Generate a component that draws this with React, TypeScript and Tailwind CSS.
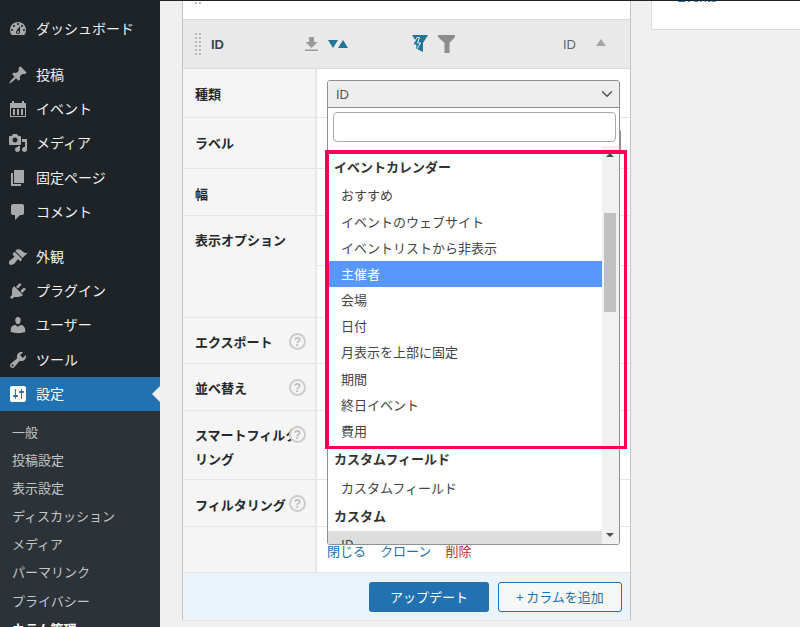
import { ChevronDown } from 'lucide-react';

const jp = 'font-["Noto_Sans_CJK_JP","Noto_Sans",sans-serif]';

// Admin menu icons (20x20 filled glyphs)
const ICONS: Record<string, string> = {
  dashboard:
    'M3.76 16h12.48c1.1-1.37 1.76-3.11 1.76-5 0-4.42-3.58-8-8-8s-8 3.58-8 8c0 1.89.66 3.63 1.76 5zM10 4c.55 0 1 .45 1 1s-.45 1-1 1-1-.45-1-1 .45-1 1-1zM6 6c.55 0 1 .45 1 1s-.45 1-1 1-1-.45-1-1 .45-1 1-1zm8 0c.55 0 1 .45 1 1s-.45 1-1 1-1-.45-1-1 .45-1 1-1zm-5.37 5.55L12 7v6c0 1.1-.9 2-2 2s-2-.9-2-2c0-.57.24-1.08.63-1.45zM4 10c.55 0 1 .45 1 1s-.45 1-1 1-1-.45-1-1 .45-1 1-1zm12 0c.55 0 1 .45 1 1s-.45 1-1 1-1-.45-1-1 .45-1 1-1zm-5 3c0-.55-.45-1-1-1s-1 .45-1 1 .45 1 1 1 1-.45 1-1z',
  post: 'M10.44 3.02l1.82-1.82 6.36 6.35-1.83 1.82c-1.05-.68-2.48-.57-3.41.36l-.75.75c-.92.93-1.04 2.35-.35 3.41l-1.83 1.82-2.41-2.41-2.8 2.79c-.42.42-3.38 2.71-3.8 2.29s1.86-3.39 2.28-3.81l2.79-2.79L4.1 9.36l1.83-1.82c1.05.69 2.48.57 3.4-.36l.75-.75c.93-.92 1.05-2.35.36-3.41z',
  event:
    'M2 4h2V2h2v2h8V2h2v2h2v14H2V4zm1 5v8h14V9H3zm2 1h2v6H5v-6zm4 0h2v6H9v-6zm4 0h2v6h-2v-6z',
  media:
    'M13 11V4c0-.55-.45-1-1-1h-1.67L9 1H5L3.67 3H2c-.55 0-1 .45-1 1v7c0 .55.45 1 1 1h10c.55 0 1-.45 1-1zM7 4.5c1.38 0 2.5 1.12 2.5 2.5S8.38 9.5 7 9.5 4.5 8.38 4.5 7 5.62 4.5 7 4.5zM14 6h5v10.5c0 1.38-1.12 2.5-2.5 2.5S14 17.88 14 16.5s1.12-2.5 2.5-2.5c.17 0 .34.02.5.05V9h-3V6zm-4 8.05V13h2v3.5c0 1.38-1.12 2.5-2.5 2.5S7 17.88 7 16.5 8.12 14 9.5 14c.17 0 .34.02.5.05z',
  page: 'M6 15V2h10v13H6zm-1 1h8v2H3V5h2v11z',
  comment:
    'M5 2h9c1.1 0 2 .9 2 2v7c0 1.1-.9 2-2 2h-2l-5 5v-5H5c-1.1 0-2-.9-2-2V4c0-1.1.9-2 2-2z',
  appearance:
    'M14.48 11.06L7.41 3.99l1.5-1.5c.5-.56 2.3-.47 3.51.32 1.21.8 1.43 1.28 2.91 2.1 1.18.64 2.45 1.26 4.45.85zm-.71.71L6.7 4.7 4.93 6.47c-.39.39-.39 1.02 0 1.41l1.06 1.06c.39.39.39 1.03 0 1.42-.6.6-1.43 1.11-2.21 1.69-.35.26-.7.53-1.01.84C1.43 13.23.13 15.9 1.53 17.3c1.39 1.39 4.05.09 5.39-1.24.31-.31.58-.66.84-1.01.58-.78 1.09-1.61 1.69-2.21.39-.39 1.02-.39 1.41 0l1.06 1.06c.39.39 1.02.39 1.41 0z',
  plugin:
    'M13.11 4.36L9.87 7.6 8 5.73l3.24-3.24c.35-.34 1.05-.2 1.56.32.52.51.66 1.21.31 1.55zm-8 1.77l.91-1.12 9.01 9.01-1.19.84c-.71.71-2.63 1.16-3.82 1.16H6.14L4.9 17.26c-.59.59-1.54.59-2.12 0-.59-.58-.59-1.53 0-2.12l1.24-1.24v-3.88c0-1.13.4-3.19 1.09-3.89zm7.26 3.97l3.24-3.24c.34-.35 1.04-.21 1.55.31.52.51.66 1.21.31 1.55l-3.24 3.25z',
  users:
    'M10 9.25c-2.27 0-2.73-3.44-2.73-3.44C7 4.02 7.82 2 9.97 2c2.16 0 2.98 2.02 2.71 3.81 0 0-.41 3.44-2.68 3.44zm0 2.57L12.72 10c2.39 0 4.52 2.33 4.52 4.53v2.49s-3.65 1.13-7.24 1.13c-3.65 0-7.24-1.13-7.24-1.13v-2.49c0-2.25 1.94-4.53 4.47-4.53z',
  tools:
    'M16.68 9.77c-1.34 1.34-3.3 1.67-4.95.99l-5.41 6.52c-.99.99-2.59.99-3.58 0s-.99-2.59 0-3.57l6.52-5.42c-.68-1.65-.35-3.61.99-4.95 1.28-1.28 3.12-1.62 4.72-1.06l-2.89 2.89 2.82 2.82 2.86-2.87c.53 1.58.18 3.39-1.08 4.65zM3.81 16.21c.4.39 1.04.39 1.43 0 .4-.4.4-1.04 0-1.43-.39-.4-1.03-.4-1.43 0-.39.39-.39 1.03 0 1.43z',
  settings:
    'M18 16V4c0-1.1-.9-2-2-2H4c-1.1 0-2 .9-2 2v12c0 1.1.9 2 2 2h12c1.1 0 2-.9 2-2zM8 11h1c.55 0 1 .45 1 1s-.45 1-1 1H8v1.5c0 .28-.22.5-.5.5s-.5-.22-.5-.5V13H6c-.55 0-1-.45-1-1s.45-1 1-1h1V5.5c0-.28.22-.5.5-.5s.5.22.5.5V11zm5-2h-1c-.55 0-1-.45-1-1s.45-1 1-1h1V5.5c0-.28.22-.5.5-.5s.5.22.5.5V7h1c.55 0 1 .45 1 1s-.45 1-1 1h-1v5.5c0 .28-.22.5-.5.5s-.5-.22-.5-.5V9z',
};

const MenuIcon = ({ name, active }: { name: string; active?: boolean }) => (
  <svg
    viewBox="0 0 20 20"
    className={`w-5 h-5 shrink-0 ${active ? 'fill-white' : 'fill-[#a7aaad]'}`}
  >
    <path d={ICONS[name]} fillRule="evenodd" />
  </svg>
);

const MenuItem = ({ icon, label, active }: { icon: string; label: string; active?: boolean }) => (
  <div
    className={`relative shrink-0 h-[34.3px] flex items-center pl-[8px] gap-[8px] text-sm ${
      active ? 'bg-[#2271b1] text-white' : 'text-[#f0f0f1]'
    }`}
  >
    <MenuIcon name={icon} active={active} />
    <span className="-mt-[2px]">{label}</span>
    {active && (
      <span className="absolute right-0 top-[9px] border-y-8 border-r-8 border-y-transparent border-r-[#f0f0f1]" />
    )}
  </div>
);

const Sidebar = () => (
  <div className="w-40 shrink-0 bg-[#1d2327] pt-[11px] flex flex-col overflow-hidden">
    <MenuItem icon="dashboard" label="ダッシュボード" />
    <div className="h-[11.3px] shrink-0" />
    <MenuItem icon="post" label="投稿" />
    <MenuItem icon="event" label="イベント" />
    <MenuItem icon="media" label="メディア" />
    <MenuItem icon="page" label="固定ページ" />
    <MenuItem icon="comment" label="コメント" />
    <div className="h-[10.6px] shrink-0" />
    <MenuItem icon="appearance" label="外観" />
    <MenuItem icon="plugin" label="プラグイン" />
    <MenuItem icon="users" label="ユーザー" />
    <MenuItem icon="tools" label="ツール" />
    <MenuItem icon="settings" label="設定" active />
    <div className="flex-1 bg-[#2c3338] pt-[6px] text-[13px] text-[#c3c6c9]">
      {['一般', '投稿設定', '表示設定', 'ディスカッション', 'メディア', 'パーマリンク', 'プライバシー'].map((s) => (
        <div key={s} className="h-[28.2px] flex items-center pl-3">
          {s}
        </div>
      ))}
      <div className="h-[28.2px] flex items-center pl-3 font-bold text-white">カラム管理</div>
    </div>
  </div>
);

const Help = () => (
  <span className="absolute right-[9px] top-[15px] w-[17px] h-[17px] rounded-full border-2 border-[#cccccc] bg-[#f5f5f5] flex items-center justify-center text-[12px] leading-none font-bold text-[#bbbbbb] font-['Liberation_Sans',sans-serif]">
    ?
  </span>
);

type RowProps = {
  label: string;
  height: string;
  help?: boolean;
  low?: boolean;
  children?: React.ReactNode;
};

const Row = ({ label, height, help, low, children }: RowProps) => (
  <div className={`flex border-b border-[#e5e5e5] ${height}`}>
    <div
      className={`relative w-[134px] shrink-0 bg-[#f5f5f5] border-r-2 border-[#e8e8e8] pl-3 ${
        low ? 'pt-[13px]' : 'pt-[12px]'
      }`}
    >
      <div className="w-[105px] break-all text-[13px] leading-6 font-bold text-[#23282d]">{label}</div>
      {help && <Help />}
    </div>
    <div className="flex-1 min-w-0 flex flex-col">{children}</div>
  </div>
);

const ColumnHeader = () => (
  <div className="h-[50px] bg-[#e9e9e9] border-y border-[#dcdcdc] flex items-center pl-3 pr-6 text-[13px]">
    <div className="grid grid-cols-2 gap-x-[2px] gap-y-[2px] w-[6px]">
      {Array.from({ length: 12 }).map((_, i) => (
        <span key={i} className="w-[2px] h-[2px] bg-[#b9b9b9]" />
      ))}
    </div>
    <span className="ml-[10px] mt-[2px] font-bold text-[#3c434a] font-['Liberation_Sans',sans-serif]">ID</span>
    <svg viewBox="0 0 13 15" className="ml-[81px] w-[13px] h-[15px] fill-[#9a9a9a]">
      <path d="M4 0h5v5h3.500l-6 6-6-6H4zM0 12.500h13V14H0z" />
    </svg>
    <svg viewBox="0 0 20 8" className="ml-[10px] w-[20px] h-[8px] fill-[#21759b]">
      <path d="M0 0h10L5 8zM10 8h10l-5-8z" />
    </svg>
    <svg viewBox="0 0 17 18" className="ml-[63px] w-[17px] h-[18px]">
      <path d="M1 0h16l-5 8v9l-6-3V8z" className="fill-[#21759b]" />
      <path d="M6 2.500L1.500 10h3.500L4 17l5.500-9H6.500L8.500 2.500z" className="fill-[#21759b] stroke-[#f4f4f4]" strokeWidth="1" />
    </svg>
    <svg viewBox="0 0 17 18" className="ml-[10px] w-[17px] h-[18px] fill-[#8c8c8c]">
      <path d="M0 0h17v2l-5.500 6v10h-5V8L0 2z" />
    </svg>
    <span className="ml-auto mt-[2px] text-[#666] font-['Liberation_Sans',sans-serif]">ID</span>
    <svg viewBox="0 0 10 7" className="ml-[20px] w-[10px] h-[7px] -mt-[3px] fill-[#a5a5a5]">
      <path d="M5 0l5 7H0z" />
    </svg>
  </div>
);

// Select2 style option list, open on top of the field rows
const TypeDropdown = () => (
  <div className="absolute left-[144px] top-[79px] w-[293px] h-[465px] border border-[#8c8f94] rounded-[3px] bg-white overflow-hidden flex flex-col">
    <div className="h-[27px] shrink-0 bg-[#eeeeee] border-b border-[#8c8f94] flex items-center pl-2 pr-[3px] text-[13px] text-[#555]">
      <span className="mt-[1px] font-['Liberation_Sans',sans-serif]">ID</span>
      <ChevronDown size={18} strokeWidth={2} className="ml-auto text-[#50575e]" />
    </div>
    <div className="h-[38px] shrink-0 pl-[5px] pr-[3px] pt-[4px]">
      <input className="w-full h-[30px] bg-white border border-[#a7aaad] rounded-[4px] outline-none" />
    </div>
    <div className="relative flex-1 min-h-0 flex">
      <div className="flex-1 min-w-0 text-[13px] text-[#444] pt-[6px]">
        <div className="h-[30px] flex items-center pl-[6px] pb-[1px] font-bold text-[#333]">イベントカレンダー</div>
        <div className="h-[26.2px] flex items-center pl-[13px]">おすすめ</div>
        <div className="h-[26.2px] flex items-center pl-[13px]">イベントのウェブサイト</div>
        <div className="h-[26.2px] flex items-center pl-[13px]">イベントリストから非表示</div>
        <div className="h-[26.2px] flex items-center pl-[13px] bg-[#5897fb] text-white">主催者</div>
        <div className="h-[26.2px] flex items-center pl-[13px]">会場</div>
        <div className="h-[26.2px] flex items-center pl-[13px]">日付</div>
        <div className="h-[26.2px] flex items-center pl-[13px]">月表示を上部に固定</div>
        <div className="h-[26.2px] flex items-center pl-[13px]">期間</div>
        <div className="h-[26.2px] flex items-center pl-[13px]">終日イベント</div>
        <div className="h-[26.2px] flex items-center pl-[13px]">費用</div>
        <div className="h-[30px] flex items-center pl-[6px] pb-[1px] font-bold text-[#333]">カスタムフィールド</div>
        <div className="h-[28px] flex items-center pl-[13px]">カスタムフィールド</div>
        <div className="h-[29px] flex items-center pl-[6px] pb-[1px] font-bold text-[#333]">カスタム</div>
        <div className="h-[27px] flex items-center pl-[13px] bg-[#dddddd]">ID</div>
      </div>
      <div className="relative w-[17px] shrink-0 bg-[#f1f1f1]">
        <span className="absolute left-[4px] top-[7px] border-x-[4px] border-b-[4px] border-x-transparent border-b-[#505050]" />
        <span className="absolute left-[2px] top-[67px] w-[12px] h-[99px] bg-[#c1c1c1]" />
        <span className="absolute left-[4px] bottom-[7px] border-x-[4px] border-t-[4px] border-x-transparent border-t-[#505050]" />
      </div>
    </div>
  </div>
);

const Panel = () => (
  <div className="relative w-[449px] shrink-0 h-[619px] border-x border-[#c3c4c7] bg-white border-b shadow-[0_1px_1px_rgba(0,0,0,0.04)]">
    <div className="h-[18px] overflow-hidden pl-3">
      <div className="grid grid-cols-2 gap-[2px] w-[6px] mt-[1px]">
        <span className="w-[2px] h-[2px] bg-[#b9b9b9]" />
        <span className="w-[2px] h-[2px] bg-[#b9b9b9]" />
      </div>
    </div>
    <ColumnHeader />
    <Row label="種類" height="h-[49px]" low />
    <Row label="ラベル" height="h-[51px]" low>
      <input className="mt-[11px] ml-[10px] w-[294px] h-[27px] border border-[#8c8f94] rounded-[3px] outline-none" />
    </Row>
    <Row label="幅" height="h-[47px]" low />
    <Row label="表示オプション" height="h-[102px]">
      <div className="h-[50px] border-b border-[#e5e5e5]" />
    </Row>
    <Row label="エクスポート" height="h-[46px]" help />
    <Row label="並べ替え" height="h-[47px]" help />
    <Row label="スマートフィルタリング" height="h-[69px]" help />
    <Row label="フィルタリング" height="h-[47px]" help low />
    <Row label="" height="h-[46px]">
      <div className="pt-[14px] pl-[10px] flex gap-[14px] text-[13px] leading-5 text-[#2271b1]">
        <span>閉じる</span>
        <span>クローン</span>
        <span className="text-[#b32d2e]">削除</span>
      </div>
    </Row>
    <div className="h-[47px] bg-[#eaf2fa] flex items-center justify-end gap-[9px] pr-2 pt-[1px] text-[13px]">
      <button className="w-[120px] h-[30px] rounded-[3px] bg-[#2271b1] text-white">アップデート</button>
      <button className="w-[124px] h-[30px] rounded-[3px] border border-[#2271b1] bg-[#f6f7f7] text-[#2271b1]">
        + カラムを追加
      </button>
    </div>
    <TypeDropdown />
    {/* red annotation box */}
    <div className="absolute left-[142px] top-[149px] w-[302px] h-[299px] border-4 border-r-[3px] border-b-[3px] border-[#ff0052] pointer-events-none" />
  </div>
);

export default function App() {
  return (
    <div className={`w-[800px] h-[627px] overflow-hidden flex flex-col bg-[#f0f0f1] ${jp}`}>
      <div className="h-px shrink-0 bg-[#1d2327]" />
      <div className="flex-1 min-h-0 flex">
        <Sidebar />
        <div className="flex-1 min-w-0 flex items-start pl-[22px]">
          <Panel />
          <div className="ml-[20px] flex-1 h-[29px] bg-white border-l border-b border-[#dcdcde] pl-[25px] overflow-hidden">
            <div className="-mt-[10px] text-[13px] leading-[14px] text-[#2271b1] font-['Liberation_Sans',sans-serif]">Events</div>
          </div>
        </div>
      </div>
    </div>
  );
}
